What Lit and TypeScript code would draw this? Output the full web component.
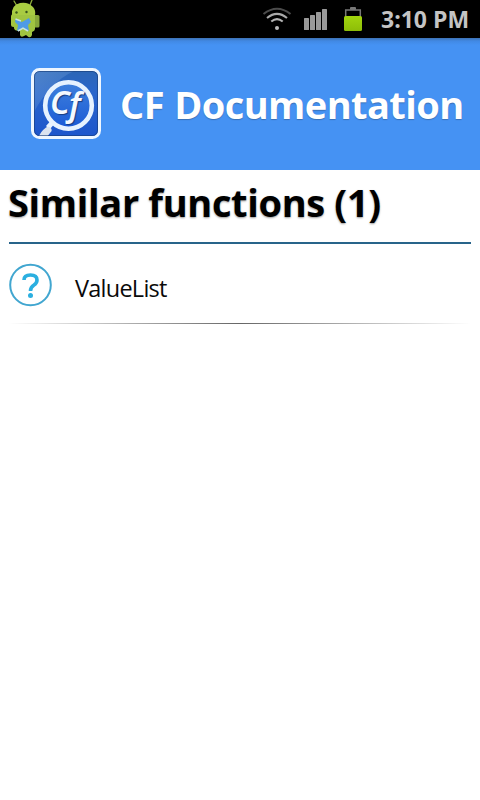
import { LitElement, html, css, svg } from "lit";
import { customElement, property } from "lit/decorators.js";

const robot = svg`
  <svg width="32" height="38" viewBox="10 0 32 38">
    <path d="M14 1 L17 6 M32 0 L30 5" stroke="#8fae3c" stroke-width="1.300" stroke-linecap="round"/>
    <rect x="32.500" y="15" width="7" height="12.500" rx="1.500" fill="#86a63a"/>
    <rect x="11" y="14" width="5" height="13" rx="2.500" fill="#a5c63f"/>
    <path d="M12 15.500 Q11 5 20 3 Q28 1.500 33 7 Q36 10 35 15.500 Z" fill="#a8cb42"/>
    <path d="M13 15 H35 V29 Q35 31 32 32 V35 Q31 38 28.500 37 L26 35 L24 36 Q21 38 20 35 V31 Q14 31 14 28 Z" fill="#a0c441"/>
    <circle cx="16.500" cy="12.500" r="1.200" fill="#38541c"/><circle cx="26.500" cy="12" r="1.200" fill="#38541c"/>
    <path d="M15.500 19 L22 22 L29 18 L31 22 L28 25 L29 31 L23 28 L17 31 L18 25 L15 22 Z" fill="#4f9be6"/>
    <path d="M15.500 19 L21 21 M18 31 L23 28 L28 31" stroke="#c8e2e0" stroke-width="1.500" fill="none"/>
  </svg>`;

const wifi = svg`
  <svg width="30" height="24" viewBox="262 7 30 24" fill="none" stroke-width="2.100">
    <path d="M263.500 14 Q277 3.500 290.500 14" stroke="#4b4b4b"/>
    <path d="M267 18 Q277 9.800 287 18" stroke="#aaa"/>
    <path d="M271.300 21.500 Q277 16.800 282.700 21.500" stroke="#b4b4b4"/>
    <circle cx="277" cy="28" r="2" fill="#bcbcbc"/>
  </svg>`;

const signal = svg`
  <svg width="24" height="24" viewBox="304 7 24 24" fill="#999">
    <rect x="304" y="18" width="5" height="12" rx=".5"/><rect x="310" y="15" width="5" height="15" rx=".5"/>
    <rect x="316" y="12" width="5" height="18" rx=".5"/><rect x="322" y="9" width="5" height="21" rx=".5"/>
  </svg>`;

const battery = svg`
  <svg width="20" height="26" viewBox="343 6 20 26">
    <defs><linearGradient id="charge" x2="0" y2="1"><stop stop-color="#a2d50e"/><stop offset="1" stop-color="#8dbd08"/></linearGradient></defs>
    <rect x="350" y="7" width="6" height="3" rx="1" fill="#777"/>
    <path d="M345.700 17 V10 H360.300 V17" fill="none" stroke="#777" stroke-width="1.500"/>
    <rect x="344" y="16" width="18" height="15" rx="1.500" fill="url(#charge)"/>
  </svg>`;

const logo = svg`
  <svg width="72" height="72" viewBox="30 68 72 72">
    <defs>
      <linearGradient id="tile" x1="0" y1="0" x2="0" y2="1"><stop stop-color="#2c66b4"/><stop offset=".35" stop-color="#2966cc"/><stop offset="1" stop-color="#1c55cc"/></linearGradient>
      <linearGradient id="lens" x2="0" y2="1"><stop stop-color="#3f80dc"/><stop offset="1" stop-color="#1a5ad6"/></linearGradient>
      <linearGradient id="gloss" x2="1" y2="1"><stop stop-color="#6b9bd8" stop-opacity=".55"/><stop offset="1" stop-color="#6b9bd8" stop-opacity=".1"/></linearGradient>
    </defs>
    <rect x="32.500" y="69.500" width="67" height="68" rx="7" fill="url(#tile)"/>
    <path d="M34 71 H74 Q50 82 34 112 Z" fill="url(#gloss)"/>
    <circle cx="68.500" cy="105.500" r="23.300" fill="url(#lens)" stroke="#e6f2ff" stroke-width="4.600"/>
    <path d="M50 121.500 L53.500 125 L49.500 129.500 L46 126 Z" fill="#e9f3ff"/>
    <path d="M46 127.500 Q49 125.500 51.500 129 Q52.500 131 50 133 L47 137 H39 Q40 132 46 127.500 Z" fill="#dbe3ef"/>
    <text class="cf" x="50" y="114" fill="#f4f9ff" font-size="33">C<tspan dx="-1" dy="2">f</tspan></text>
    <rect x="32.500" y="69.500" width="67" height="68" rx="7" fill="none" stroke="#eef6ff" stroke-width="3"/>
    <rect x="34.500" y="71.500" width="63" height="64" rx="5" fill="none" stroke="#163b74" stroke-opacity=".6"/>
  </svg>`;

const question = svg`
  <svg width="44" height="44" viewBox="9 263 44 44" fill="none">
    <circle cx="30.500" cy="285" r="20.300" stroke="#41a6d0" stroke-width="2"/>
    <path d="M24 280 Q24 275 30.500 275 Q37 275 37 280 Q37 283 34 285 Q30.500 287.200 30.500 291" stroke="#2bafe0" stroke-width="3.600"/>
    <circle cx="30.500" cy="295.500" r="2.500" fill="#2bafe0"/>
  </svg>`;

@customElement("function-row")
class FunctionRow extends LitElement {
  @property() name = "";
  static styles = css`
    :host { display: block; }
    .row { height: 79px; display: flex; align-items: flex-start; }
    svg { display: block; margin: 19px 22px 0 1px; }
    .name { font: 23.500px/32px "Open Sans", "Noto Sans", sans-serif; margin-top: 28px; letter-spacing: -0.75px; color: #0a0a0a; }
    .rule { height: 1px; background: linear-gradient(90deg, transparent, #666 50%, transparent); }
  `;
  render() {
    return html`<div class="row">${question}<span class="name">${this.name}</span></div><div class="rule"></div>`;
  }
}

@customElement("app-root")
class AppRoot extends LitElement {
  static styles = css`
    :host { display: block; width: 480px; height: 800px; overflow: hidden; background: #fff; font-family: "Open Sans", "Noto Sans", sans-serif; }
    svg { display: block; flex: none; }
    .cf { font-family: "Noto Sans", sans-serif; font-style: italic; font-weight: 600; text-shadow: 1px 1px 1px #173c82; }
    .status { height: 38px; box-sizing: border-box; background: #000; display: flex; align-items: flex-start; padding-left: 10px; }
    .wifi { margin: 7px 0 0 220px; }
    .signal { margin: 7px 0 0 12px; }
    .battery { margin: 6px 0 0 15px; }
    .time { margin-left: 18px; font-size: 23px; line-height: 38px; font-weight: 700; color: #c4c4c4; white-space: nowrap; }
    .header { height: 132px; box-sizing: border-box; background: linear-gradient(#3d72b4 0, #4189e4 3px, #4592f3 7px); display: flex; padding: 30px 0 0 30px; }
    h1, h2 { margin: 0; font-weight: 700; white-space: nowrap; }
    h1 { color: #fff; font-size: 38px; line-height: 52px; margin: 10px 0 0 18px; letter-spacing: -0.58px; word-spacing: 1px; text-shadow: 0 1px 1px rgba(40, 60, 90, .4); }
    h2 { color: #000; font-size: 38px; line-height: 52px; height: 72px; box-sizing: border-box; padding-top: 6px; margin-left: -1px; letter-spacing: -0.35px; text-shadow: 0 1px 2px rgba(0, 0, 0, .4); }
    .content { padding: 0 9px; }
    .divider { height: 2px; background: #28648a; }
    function-row { margin-left: -1px; }
  `;
  render() {
    return html`
      <div class="status">${robot}
        <div class="wifi">${wifi}</div><div class="signal">${signal}</div><div class="battery">${battery}</div>
        <span class="time">3:10 PM</span>
      </div>
      <header class="header">${logo}<h1>CF Documentation</h1></header>
      <main class="content">
        <h2>Similar functions (1)</h2>
        <div class="divider"></div>
        <function-row name="ValueList"></function-row>
      </main>`;
  }
}
